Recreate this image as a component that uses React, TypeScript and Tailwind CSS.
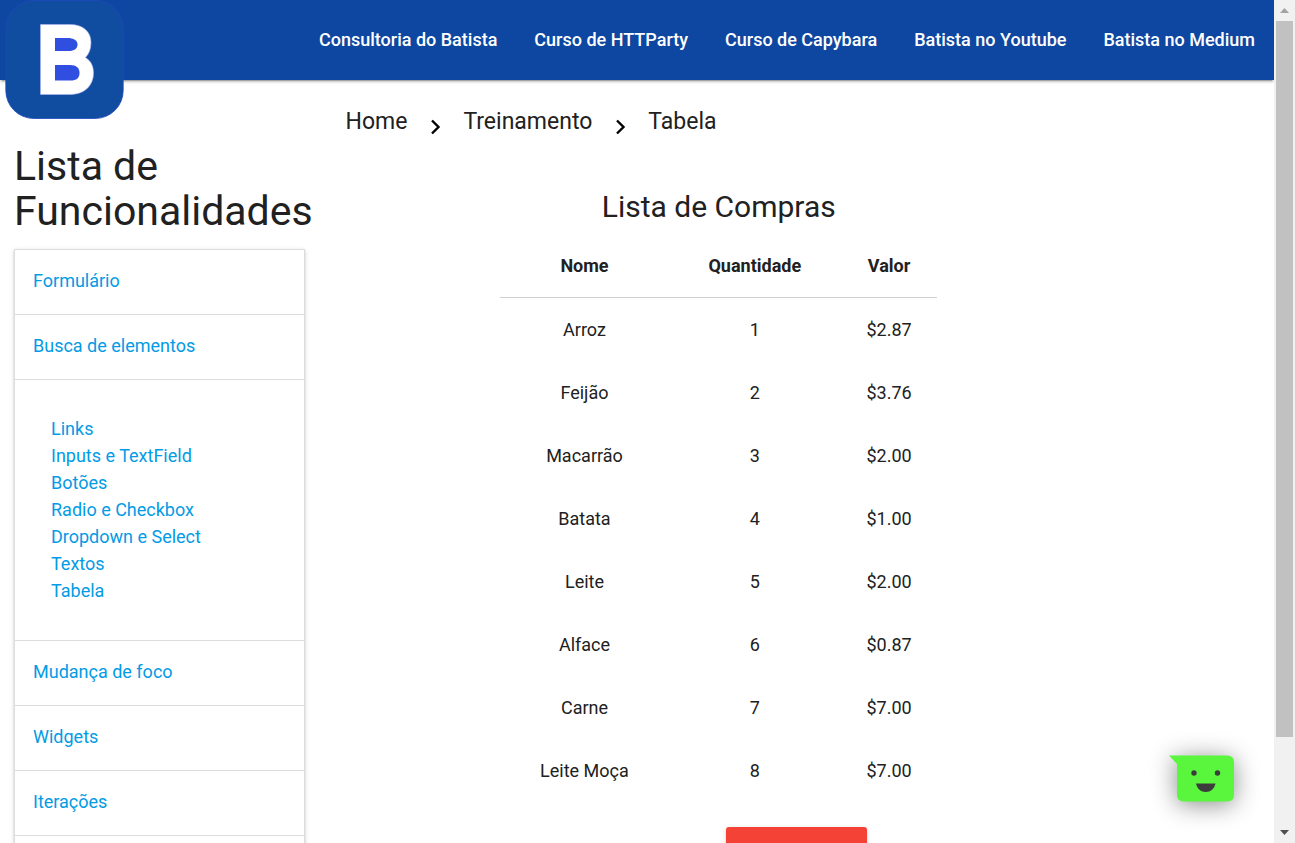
const navLinks = [
  'Consultoria do Batista',
  'Curso de HTTParty',
  'Curso de Capybara',
  'Batista no Youtube',
  'Batista no Medium',
];

const subLinks = [
  'Links',
  'Inputs e TextField',
  'Botões',
  'Radio e Checkbox',
  'Dropdown e Select',
  'Textos',
  'Tabela',
];

const items = [
  ['Arroz', '1', '$2.87'],
  ['Feijão', '2', '$3.76'],
  ['Macarrão', '3', '$2.00'],
  ['Batata', '4', '$1.00'],
  ['Leite', '5', '$2.00'],
  ['Alface', '6', '$0.87'],
  ['Carne', '7', '$7.00'],
  ['Leite Moça', '8', '$7.00'],
];

function Logo() {
  return (
    <a href="#" aria-label="Batista" className="absolute top-0 left-[5px] block">
      <svg width="119" height="119" viewBox="0 0 119 119" className="block">
        <rect x="0.8" y="0.5" width="117.4" height="118" rx="28" fill="#104c9f" stroke="#2049bd" strokeWidth="0.8" />
        <path
          d="M35.500 24.500H65C78 24.500 86 31.500 86 42.500C86 49 84 54 80.500 57.500C86 61 88.500 66 88.500 73C88.500 86 79 94.500 65 94.500H35.500Z"
          fill="#fff"
          stroke="#a9b4f2"
          strokeWidth="0.600"
        />
        <path d="M50 38H62C69 38 72.500 40.500 72.500 44.500C72.500 48.500 69.500 51 63.500 51H50Z" fill="#304fe0" />
        <path d="M50 65H65C71.500 65 74.500 68 74.500 73C74.500 78 71.500 80.500 65.500 80.500H50Z" fill="#304fe0" />
      </svg>
    </a>
  );
}

function Chevron() {
  return (
    <svg width="12" height="16" viewBox="0 0 12 16" fill="none" stroke="#000" strokeWidth="2.4" className="mt-2.5" aria-hidden="true">
      <path d="M2 1.500L8.500 8L2 14.500" />
    </svg>
  );
}

function MenuItem({ label }: { label: string }) {
  return (
    <li className="border-b border-[#ddd] px-[18px] pt-[17px] pb-[19px] leading-7">
      <a href="#">{label}</a>
    </li>
  );
}

function ScrollRail() {
  return (
    <div className="flex w-[21px] shrink-0 flex-col items-center bg-[#f1f1f1]" aria-hidden="true">
      <div className="flex h-[21px] shrink-0 items-center">
        <svg width="9" height="5" viewBox="0 0 9 5"><path d="M0 5L4.500 0L9 5Z" fill="#a3a3a3" /></svg>
      </div>
      <div className="flex w-[17px] flex-1 flex-col">
        <div className="h-[89.400%] bg-[#c1c1c1]" />
      </div>
      <div className="flex h-[21px] shrink-0 items-center">
        <svg width="9" height="5" viewBox="0 0 9 5"><path d="M0 0L4.500 5L9 0Z" fill="#505050" /></svg>
      </div>
    </div>
  );
}

export default function App() {
  return (
    <div className="flex h-screen overflow-hidden bg-white font-['Roboto',sans-serif] text-[18px] leading-[27px] text-[#212121]">
      <div className="relative min-w-0 flex-1 overflow-hidden">
        <header className="relative flex h-20 justify-end bg-[#0d47a1] shadow-[0_2px_2px_0_rgba(0,0,0,0.14),0_1px_5px_0_rgba(0,0,0,0.12),0_3px_1px_-2px_rgba(0,0,0,0.2)]">
          <Logo />
          <nav className="flex items-center gap-[37px] pr-[19px] pb-0.5">
            {navLinks.map((label) => (
              <a key={label} href="#" className="font-medium whitespace-nowrap text-white">
                {label}
              </a>
            ))}
          </nav>
        </header>

        <div className="flex">
          <aside className="w-1/4 shrink-0 px-3.5 pt-16">
            <h4 className="mb-[15px] text-[41px] leading-[45px]">Lista de Funcionalidades</h4>
            <ul className="border border-[#ddd] text-[#039be5] shadow-[0_2px_2px_0_rgba(0,0,0,0.14),0_1px_5px_0_rgba(0,0,0,0.12),0_3px_1px_-2px_rgba(0,0,0,0.2)]">
              <MenuItem label="Formulário" />
              <MenuItem label="Busca de elementos" />
              <li className="border-b border-[#ddd] px-9 pt-[35px] pb-9">
                <ul>
                  {subLinks.map((label) => (
                    <li key={label}><a href="#">{label}</a></li>
                  ))}
                </ul>
              </li>
              <MenuItem label="Mudança de foco" />
              <MenuItem label="Widgets" />
              <MenuItem label="Iterações" />
              <li className="h-16" />
            </ul>
          </aside>

          <main className="min-w-0 flex-1 px-[13px]">
            <nav aria-label="Breadcrumb" className="flex items-center pt-[21px] pl-3.5 text-[23px] leading-[42px]">
              <a href="#">Home</a>
              <span className="pr-[21px] pl-[23px]"><Chevron /></span>
              <a href="#">Treinamento</a>
              <span className="pr-[21px] pl-[23px]"><Chevron /></span>
              <a href="#">Tabela</a>
            </nav>
            <div className="grid grid-cols-12 pt-12">
              <div className="col-span-6 col-start-3 px-3.5">
                <h5 className="mb-[11px] text-center text-[30px] leading-8">Lista de Compras</h5>
                <table className="w-full table-fixed border-separate border-spacing-0 text-center">
                  <colgroup>
                    <col className="w-[38.500%]" />
                    <col className="w-[39.500%]" />
                    <col className="w-[22%]" />
                  </colgroup>
                  <thead>
                    <tr>
                      {['Nome', 'Quantidade', 'Valor'].map((h) => (
                        <th key={h} className="border-b border-[#d0d0d0] py-[18px] font-bold">{h}</th>
                      ))}
                    </tr>
                  </thead>
                  <tbody>
                    {items.map((row) => (
                      <tr key={row[0]}>
                        {row.map((cell, i) => (
                          <td key={i} className="py-[18px]">{cell}</td>
                        ))}
                      </tr>
                    ))}
                  </tbody>
                </table>
              </div>
            </div>
            <div className="flex justify-center pt-[25px]">
              <button
                type="button"
                aria-label="Voltar"
                className="h-[45px] w-[141px] rounded-[3px] bg-[#f44336] shadow-[0_2px_2px_0_rgba(0,0,0,0.14),0_1px_5px_0_rgba(0,0,0,0.12),0_3px_1px_-2px_rgba(0,0,0,0.2)]"
              />
            </div>
          </main>
        </div>

        <button type="button" aria-label="Chat" className="absolute right-10 bottom-[41px]">
          <svg width="65" height="47" viewBox="0 0 65 47" className="block overflow-visible drop-shadow-[0_3px_12px_rgba(0,0,0,0.45)]">
            <path d="M0 0.500H58Q65 0.500 65 7V40Q65 46.500 58 46.500H15Q8 46.500 8 40V9Z" fill="#5af63e" />
            <circle cx="25" cy="18" r="2.700" fill="#3c3c3c" />
            <circle cx="48.500" cy="18" r="2.700" fill="#3c3c3c" />
            <path d="M27 28.500H46.500C45.500 33.500 41.500 37 36.700 37S28 33.500 27 28.500Z" fill="#3c3c3c" />
          </svg>
        </button>
      </div>
      <ScrollRail />
    </div>
  );
}
